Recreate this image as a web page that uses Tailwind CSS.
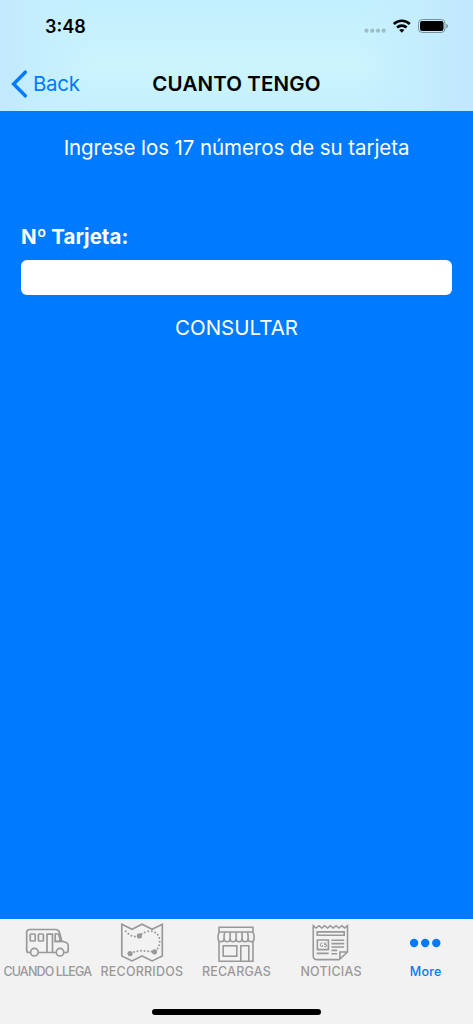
<!DOCTYPE html>
<html lang="es">
<head>
<meta charset="utf-8">
<meta name="viewport" content="width=device-width, initial-scale=1">
<title>Cuanto Tengo</title>
<script src="https://cdn.jsdelivr.net/npm/@tailwindcss/browser@4"></script>
</head>
<body class="flex h-screen flex-col overflow-hidden bg-[#007bff] font-['Inter','Liberation_Sans',sans-serif]">
<header class="flex h-[111px] shrink-0 flex-col bg-[#c8f2fe] bg-[linear-gradient(90deg,#c2e9fe_0%,#c5effe_9%,transparent_20%,transparent_76%,#c4edfe_88%,#c0e7fe_100%),linear-gradient(180deg,#c3f0fe,#cbf4fd_60%,#c4f0fd)]">
  <div class="flex h-[52px] items-center justify-between pr-[24px] pl-[45px]">
    <span class="pt-px text-[18px] leading-6 font-semibold tracking-[0px]">3:48</span>
    <svg class="h-[24px] w-[85px]" viewBox="364 14 85 24">
      <g fill="#9dbdc8"><circle cx="366.5" cy="30.7" r="2.1"/><circle cx="372.3" cy="30.7" r="2.1"/><circle cx="378" cy="30.7" r="2.1"/><circle cx="383.7" cy="30.7" r="2.1"/></g>
      <g fill="none" stroke="#000" stroke-width="2.6"><path d="M393.800 24a11.500 11.500 0 0 1 16 0"/><path d="M397 27.500a7 7 0 0 1 9.600 0"/></g>
      <path d="M399.200 30a4 4 0 0 1 5.200 0l-2.600 2.700z"/>
      <rect x="418.500" y="19.500" width="26.500" height="13" rx="3.800" fill="none" stroke="#799299"/>
      <rect x="420" y="21" width="23.500" height="10" rx="2.300"/>
      <path d="M446.300 24v4.400c1.200-.4 1.700-1.200 1.700-2.200s-.5-1.800-1.700-2.200z" fill="#799299"/>
    </svg>
  </div>
  <div class="grid h-[59px] grid-cols-[1fr_auto_1fr] items-center pt-[4px] pl-[11px]">
    <div class="flex items-center gap-[5px] text-[#007bff]">
      <svg class="h-[28px] w-[17px]" viewBox="0 0 17 28" fill="none" stroke="currentColor" stroke-width="3.500" stroke-linecap="round"><path d="M14.300 2.200 2.600 14 14.300 25.800"/></svg>
      <span class="text-[20.500px] leading-7 tracking-[-0.3px]">Back</span>
    </div>
    <h1 class="mr-[11px] text-[20.500px] leading-7 font-semibold tracking-[0.13px]">CUANTO TENGO</h1>
  </div>
</header>
<main class="flex flex-1 flex-col px-[21px] pt-[22px] text-white">
  <p class="text-center text-[20.500px] leading-[30px] tracking-[-0.08px]">Ingrese los 17 números de su tarjeta</p>
  <label for="card" class="mt-[60px] text-[20.500px] leading-[28px] font-bold">Nº Tarjeta:</label>
  <input id="card" class="mt-[9px] h-[35px] w-full rounded-[6px] bg-white px-2 text-black outline-none">
  <button class="mt-[19px] self-center text-[20.500px] leading-[28px] tracking-[0px]">CONSULTAR</button>
</main>
<nav class="flex h-[105px] shrink-0 flex-col bg-[#f2f2f2] text-[#999]">
  <div class="grid h-[75px] grid-cols-5">
    <a class="flex flex-col items-center">
      <svg class="h-[44px] w-[48px]" viewBox="23.300 919 48 44" fill="none" stroke="currentColor" stroke-width="1.700">
        <path d="M30.500 952.500H29q-2 0-2-2V932.500q0-3 3-3h26q3 0 3.800 3l2.200 8.500 4.500 1.500q2 .8 2 3v4.500q0 2.500-2 2.500h-3M39 952.500h17M55 941.500h7"/>
        <rect x="30.500" y="934" width="5" height="7" rx=".8"/><rect x="38.700" y="934" width="5" height="7" rx=".8"/>
        <path d="M47.300 952.500V934.200h5.500V952.500M55.500 941.300V934h3.400l1.900 7.300z"/>
        <circle cx="34.700" cy="952.200" r="3.800" fill="#f2f2f2"/><circle cx="60.300" cy="952.200" r="3.800" fill="#f2f2f2"/>
      </svg>
      <span class="mt-[1px] text-[12.500px] leading-4 font-medium tracking-[-0.85px] whitespace-nowrap">CUANDO LLEGA</span>
    </a>
    <a class="flex flex-col items-center">
      <svg class="h-[44px] w-[48px]" viewBox="117.900 919 48 44" fill="none" stroke="currentColor" stroke-width="1.700">
        <path d="m121.700 924.300 10.200 5 10-5 10.100 5 10.200-5v31.600l-10.200 5-10.100-5-10 5-10.200-5z"/>
        <path d="M125.700 931.300Q131 937.800 138.500 936.200 145 931 150.500 931.200C162 931.500 161.500 947 154.800 951.500 145 951.500 139 949 130.500 953.500" stroke-dasharray="0 3.600" stroke-width="2" stroke-linecap="round"/>
        <g fill="currentColor" stroke="none"><circle cx="139.300" cy="935.900" r="2.600"/><circle cx="154.400" cy="951.800" r="2.600"/><circle cx="130" cy="953.600" r="2.600"/></g>
      </svg>
      <span class="mt-[1px] text-[12.500px] leading-4 font-medium tracking-[0.2px] whitespace-nowrap">RECORRIDOS</span>
    </a>
    <a class="flex flex-col items-center">
      <svg class="h-[44px] w-[48px]" viewBox="212.500 919 48 44" fill="none" stroke="currentColor" stroke-width="1.600">
        <path d="M219.500 932v-4.700h34v4.700zM219.500 941.500v19.700h34v-19.700"/>
        <path d="M219.500 932l-.9 3.500v3a3 3.300 0 0 0 6 0 3 3.300 0 0 0 6 0 3 3.300 0 0 0 6 0 3 3.300 0 0 0 6 0 3 3.300 0 0 0 6 0 3 3.300 0 0 0 6 0v-3l-1.100-3.500M225.200 932l-.6 3.500v3M230.800 932l-.2 3.500v3M236.600 932v6.500M242.400 932l.2 3.500v3M248 932l.6 3.500v3"/>
        <rect x="223.700" y="945.800" width="13.600" height="10.400"/><path d="M241.300 961.300v-15.500h8v15.500"/>
      </svg>
      <span class="mt-[1px] text-[12.500px] leading-4 font-medium tracking-[0.2px] whitespace-nowrap">RECARGAS</span>
    </a>
    <a class="flex flex-col items-center">
      <svg class="h-[44px] w-[48px]" viewBox="307.100 919 48 44" fill="none" stroke="currentColor" stroke-width="1.600">
        <path d="M347.600 952V925.700l-2.900 2.300-2.850-2.300-2.850 2.300-2.850-2.300-2.850 2.300-2.850-2.300-2.850 2.300-2.850-2.300-2.850 2.300-2.850-2.300-2.850 2.300-2.850-2.300V956q0 3.600 3.500 3.600h22.400zM340 959.600v-7.600h7.600"/>
        <path d="M317.300 931.900h27v3.400h-27zM317.500 940h11v9.600h-11zM331.500 940.300h12.800M331.500 943.600h12.800M331.500 947h12.800M316.700 953.400h12M331.500 950.400h5.800M331.500 953.700h5.800"/>
        <path d="M322.600 943h-.8q-1.300 0-1.300 1.800t1.300 1.800h.8v-1.600M326.500 943h-2v1.600h2v2h-2.200" stroke-width="1"/>
      </svg>
      <span class="mt-[1px] text-[12.500px] leading-4 font-medium tracking-[0.2px] whitespace-nowrap">NOTICIAS</span>
    </a>
    <a class="flex flex-col items-center text-[#007bff]">
      <svg class="h-[44px] w-[48px]" viewBox="401.700 919 48 44" fill="currentColor"><circle cx="413.800" cy="943" r="4.200"/><circle cx="424.900" cy="943" r="4.200"/><circle cx="436" cy="943" r="4.200"/></svg>
      <span class="mt-[1px] text-[12.500px] leading-4 font-medium tracking-[0.2px]">More</span>
    </a>
  </div>
  <div class="ml-[152px] mt-[14.500px] h-[6px] w-[169px] rounded-full bg-black"></div>
</nav>
</body>
</html>
